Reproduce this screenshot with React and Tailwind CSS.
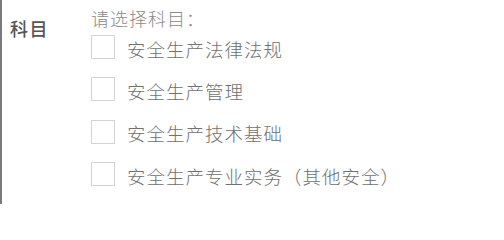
import React, { useState } from 'react';

const subjects = [
  '安全生产法律法规',
  '安全生产管理',
  '安全生产技术基础',
  '安全生产专业实务（其他安全）',
];

const App = () => {
  const [checked, setChecked] = useState({});

  const toggle = (i) => setChecked((c) => ({ ...c, [i]: !c[i] }));

  return (
    <div
      className="h-[204px] w-[504px] bg-white border-l-2 border-[#7a7a7a] flex"
      style={{ fontFamily: '"Noto Sans CJK SC", "Noto Sans", sans-serif' }}
    >
      <div className="w-[89px] pl-[8px] pt-[16px] text-[18px] leading-[24px] font-medium text-[#555] tracking-[1.5px]">
        科目
      </div>
      <div className="flex-1 pt-[6px]">
        <div className="text-[18px] leading-[24px] font-light text-[#8a8a8a] tracking-[1px]">请选择科目：</div>
        <div className="mt-[5px] flex flex-col gap-[18.4px]">
          {subjects.map((s, i) => (
            <label key={i} className="h-[24px] flex items-center gap-[12px] cursor-pointer" onClick={() => toggle(i)}>
              <span className="w-[24px] h-[24px] border border-[#d4d4d4] bg-white flex items-center justify-center shrink-0">
                {checked[i] && <span className="w-[12px] h-[12px] bg-[#888]" />}
              </span>
              <span className="text-[18.5px] leading-[24px] font-light text-[#707070] tracking-[1px] pt-[3px]">{s}</span>
            </label>
          ))}
        </div>
      </div>
    </div>
  );
};

export default App;
